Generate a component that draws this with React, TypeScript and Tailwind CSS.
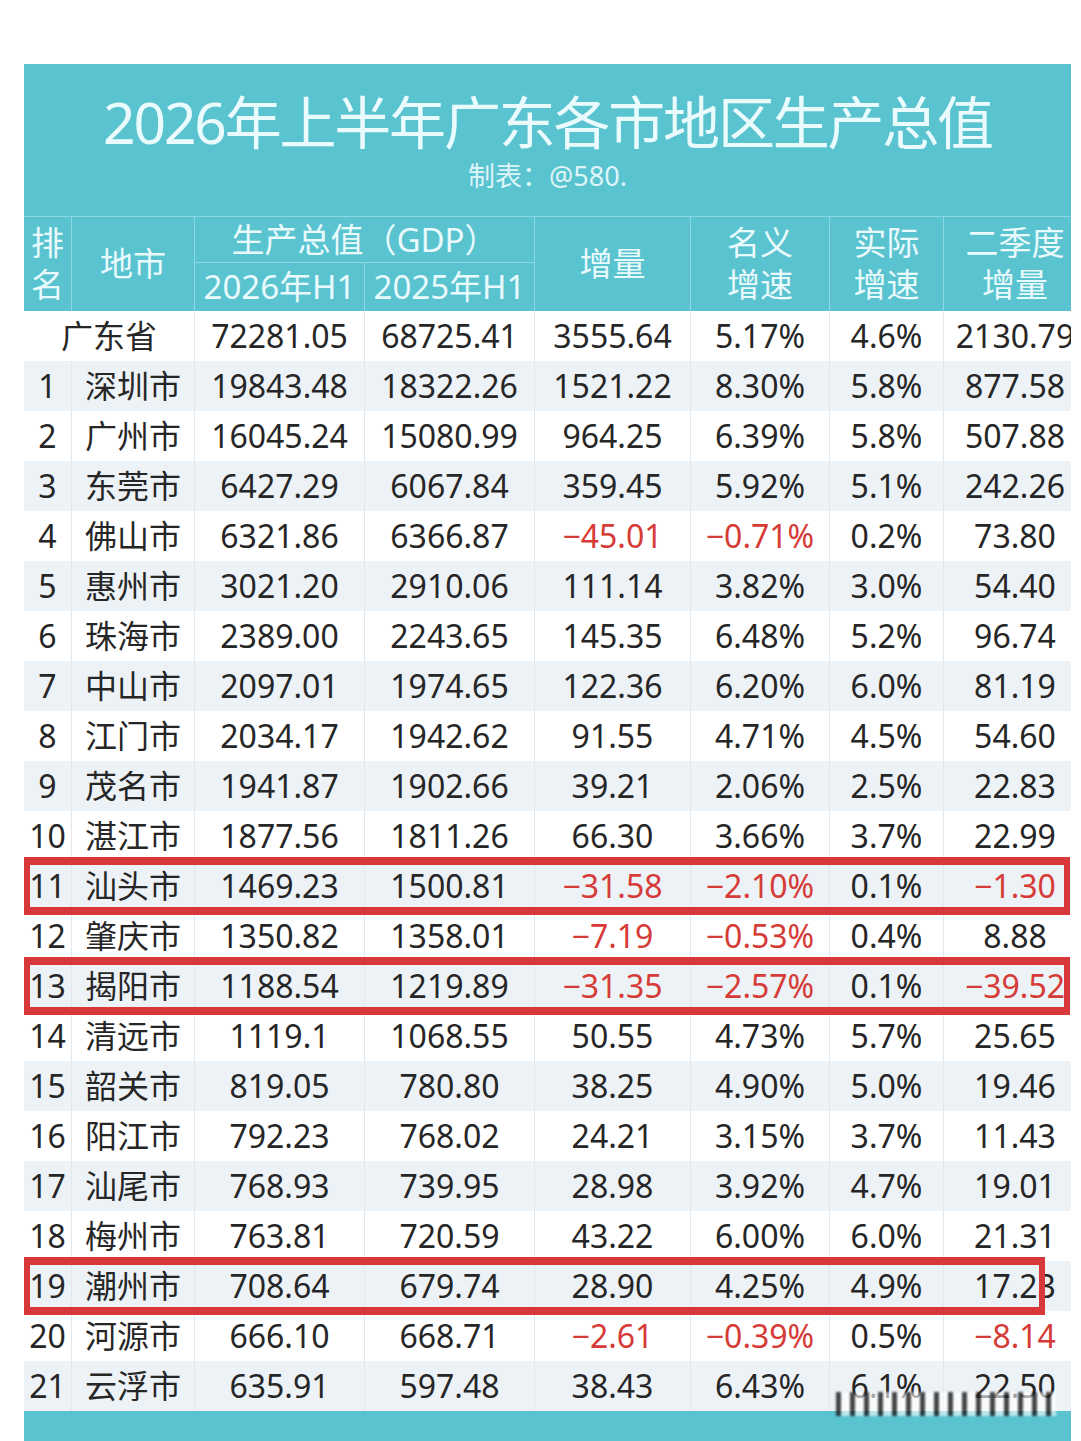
import type { ReactNode } from 'react';

type Row = {
  rank: number | null;
  city: string;
  gdp26: string;
  gdp25: string;
  inc: string;
  nominal: string;
  real: string;
  q2: string;
  box?: 'full' | 'short';
};

const rows: Row[] = [
  { rank: null, city: '广东省', gdp26: '72281.05', gdp25: '68725.41', inc: '3555.64', nominal: '5.17%', real: '4.6%', q2: '2130.79' },
  { rank: 1, city: '深圳市', gdp26: '19843.48', gdp25: '18322.26', inc: '1521.22', nominal: '8.30%', real: '5.8%', q2: '877.58' },
  { rank: 2, city: '广州市', gdp26: '16045.24', gdp25: '15080.99', inc: '964.25', nominal: '6.39%', real: '5.8%', q2: '507.88' },
  { rank: 3, city: '东莞市', gdp26: '6427.29', gdp25: '6067.84', inc: '359.45', nominal: '5.92%', real: '5.1%', q2: '242.26' },
  { rank: 4, city: '佛山市', gdp26: '6321.86', gdp25: '6366.87', inc: '−45.01', nominal: '−0.71%', real: '0.2%', q2: '73.80' },
  { rank: 5, city: '惠州市', gdp26: '3021.20', gdp25: '2910.06', inc: '111.14', nominal: '3.82%', real: '3.0%', q2: '54.40' },
  { rank: 6, city: '珠海市', gdp26: '2389.00', gdp25: '2243.65', inc: '145.35', nominal: '6.48%', real: '5.2%', q2: '96.74' },
  { rank: 7, city: '中山市', gdp26: '2097.01', gdp25: '1974.65', inc: '122.36', nominal: '6.20%', real: '6.0%', q2: '81.19' },
  { rank: 8, city: '江门市', gdp26: '2034.17', gdp25: '1942.62', inc: '91.55', nominal: '4.71%', real: '4.5%', q2: '54.60' },
  { rank: 9, city: '茂名市', gdp26: '1941.87', gdp25: '1902.66', inc: '39.21', nominal: '2.06%', real: '2.5%', q2: '22.83' },
  { rank: 10, city: '湛江市', gdp26: '1877.56', gdp25: '1811.26', inc: '66.30', nominal: '3.66%', real: '3.7%', q2: '22.99' },
  { rank: 11, city: '汕头市', gdp26: '1469.23', gdp25: '1500.81', inc: '−31.58', nominal: '−2.10%', real: '0.1%', q2: '−1.30', box: 'full' },
  { rank: 12, city: '肇庆市', gdp26: '1350.82', gdp25: '1358.01', inc: '−7.19', nominal: '−0.53%', real: '0.4%', q2: '8.88' },
  { rank: 13, city: '揭阳市', gdp26: '1188.54', gdp25: '1219.89', inc: '−31.35', nominal: '−2.57%', real: '0.1%', q2: '−39.52', box: 'full' },
  { rank: 14, city: '清远市', gdp26: '1119.1', gdp25: '1068.55', inc: '50.55', nominal: '4.73%', real: '5.7%', q2: '25.65' },
  { rank: 15, city: '韶关市', gdp26: '819.05', gdp25: '780.80', inc: '38.25', nominal: '4.90%', real: '5.0%', q2: '19.46' },
  { rank: 16, city: '阳江市', gdp26: '792.23', gdp25: '768.02', inc: '24.21', nominal: '3.15%', real: '3.7%', q2: '11.43' },
  { rank: 17, city: '汕尾市', gdp26: '768.93', gdp25: '739.95', inc: '28.98', nominal: '3.92%', real: '4.7%', q2: '19.01' },
  { rank: 18, city: '梅州市', gdp26: '763.81', gdp25: '720.59', inc: '43.22', nominal: '6.00%', real: '6.0%', q2: '21.31' },
  { rank: 19, city: '潮州市', gdp26: '708.64', gdp25: '679.74', inc: '28.90', nominal: '4.25%', real: '4.9%', q2: '17.23', box: 'short' },
  { rank: 20, city: '河源市', gdp26: '666.10', gdp25: '668.71', inc: '−2.61', nominal: '−0.39%', real: '0.5%', q2: '−8.14' },
  { rank: 21, city: '云浮市', gdp26: '635.91', gdp25: '597.48', inc: '38.43', nominal: '6.43%', real: '6.1%', q2: '22.50' },
];

// the last column is wider than what is visible; the panel clips it
const cols = 'grid grid-cols-[48px_123px_170px_170px_156px_139px_114px_142px]';

const isNeg = (v: string) => v.startsWith('−');

function Cell({ children, className = '' }: { children: ReactNode; className?: string }) {
  return (
    <div className={`flex items-center justify-center border-r border-[#e1e7eb] ${className}`}>{children}</div>
  );
}

function Value({ v }: { v: string }) {
  return <Cell className={isNeg(v) ? 'text-[#d63b37]' : ''}>{v}</Cell>;
}

function Head({ children, className = '' }: { children: ReactNode; className?: string }) {
  return (
    <div className={`flex flex-col items-center justify-center border-r border-[#8fd8e1] leading-[42px] ${className}`}>
      {children}
    </div>
  );
}

export default function App() {
  return (
    <div className="h-[1441px] w-[1081px] overflow-hidden bg-white pl-[24px] pt-[64px] font-['Noto_Sans','Noto_Sans_CJK_SC',sans-serif]">
      <div className="relative w-[1047px] overflow-hidden bg-[#5ac3d0]">
        {/* title */}
        <div className="flex h-[152px] flex-col items-center pt-[28px] text-[#eafbfd]">
          <div className="text-[57px] leading-[60px] tracking-[-2.2px]">2026年上半年广东各市地区生产总值</div>
          <div className="mt-[7px] text-[27px] leading-[34px] text-[#def5f8]">制表：@580.</div>
        </div>

        {/* header */}
        <div className={`${cols} grid-rows-[46px_48px] border-t border-[#8fd8e1] text-[33px] text-[#e8fafc]`}>
          <Head className="row-span-2">
            <span>排</span>
            <span>名</span>
          </Head>
          <Head className="row-span-2">地市</Head>
          <Head className="col-span-2 border-b">生产总值（GDP）</Head>
          <Head className="row-span-2">增量</Head>
          <Head className="row-span-2">
            <span>名义</span>
            <span>增速</span>
          </Head>
          <Head className="row-span-2">
            <span>实际</span>
            <span>增速</span>
          </Head>
          <Head className="row-span-2 border-r-0">
            <span>二季度</span>
            <span>增量</span>
          </Head>
          <Head>2026年H1</Head>
          <Head>2025年H1</Head>
        </div>

        {/* body */}
        <div className="text-[32px] text-[#262626]">
          {rows.map((r, i) => (
            <div key={r.city} className={`relative ${cols} h-[50px] ${i % 2 === 1 ? 'bg-[#edf2f7]' : 'bg-white'}`}>
              {r.rank === null ? (
                <Cell className="col-span-2">{r.city}</Cell>
              ) : (
                <>
                  <Cell>{r.rank}</Cell>
                  <Cell>{r.city}</Cell>
                </>
              )}
              <Value v={r.gdp26} />
              <Value v={r.gdp25} />
              <Value v={r.inc} />
              <Value v={r.nominal} />
              <Value v={r.real} />
              <Cell className="border-r-0">
                <span className={isNeg(r.q2) ? 'text-[#d63b37]' : ''}>{r.q2}</span>
              </Cell>
              {r.box && (
                <div
                  className={`absolute -top-[4px] -bottom-[4px] left-0 z-10 border-x-[6px] border-y-[8px] border-[#d8383a] ${
                    r.box === 'full' ? 'w-[1046px]' : 'w-[1021px]'
                  }`}
                />
              )}
            </div>
          ))}
        </div>

        {/* bottom band */}
        <div className="h-[40px]" />

        {/* smeared watermark over the last row */}
        <div className="absolute left-[812px] top-[1328px] z-10 h-[24px] w-[220px] bg-[repeating-linear-gradient(90deg,rgba(25,25,25,0.8)_0px,rgba(25,25,25,0.8)_5px,rgba(255,255,255,0.6)_5px,rgba(255,255,255,0.6)_14px)] blur-[1px]" />
      </div>
    </div>
  );
}
